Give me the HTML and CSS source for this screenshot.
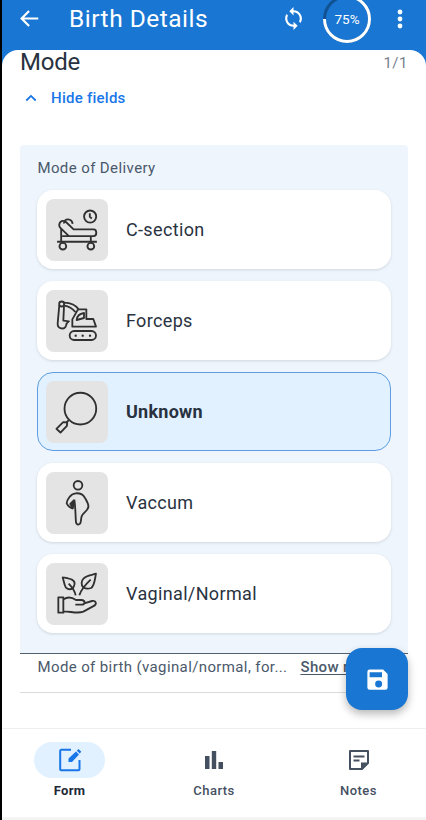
FILE: index.html
```html
<!DOCTYPE html>
<html lang="en">
<head>
<meta charset="utf-8">
<title>Birth Details</title>
<link rel="stylesheet" href="styles.css">
</head>
<body>
<div class="app">
  <header class="bar">
    <svg class="back" viewBox="0 0 24 24"><path d="M22 12H3.500M11.500 3.500 3 12l8.500 8.500"/></svg>
    <h1>Birth Details</h1>
    <svg class="sync" viewBox="0 0 24 24"><path d="M12 4V1L8 5l4 4V6a6 6 0 0 1 6 6c0 1-.25 1.970-.7 2.800l1.460 1.460A8 8 0 0 0 12 4zm0 14a6 6 0 0 1-6-6c0-1 .25-1.970.7-2.800L5.240 7.740A8 8 0 0 0 12 20v3l4-4-4-4z"/></svg>
    <div class="progress">
      <svg viewBox="0 0 50 50"><circle class="track" cx="25" cy="25" r="22.500"/><path class="arc" d="M25 2.500A22.500 22.500 0 1 1 2.500 25"/></svg>
      <span>75%</span>
    </div>
    <svg class="dots" viewBox="0 0 6 20"><circle cx="3" cy="3" r="2.400"/><circle cx="3" cy="10" r="2.400"/><circle cx="3" cy="17" r="2.400"/></svg>
  </header>
  <main class="sheet">
    <div class="section-title"><h2>Mode</h2><span>1/1</span></div>
    <div class="toggle"><svg viewBox="0 0 12 8"><path d="M1.300 6.500 6 1.900l4.700 4.600"/></svg><span>Hide fields</span></div>
    <section class="panel">
      <div class="label">Mode of Delivery</div>
      <div class="option">
        <div class="thumb"><svg viewBox="50 147 184 184"><circle cx="181" cy="199" r="18"/><path d="M180 189v11l6 5M103 220c0-17 24-17 26 1M95 235c-7-6-7-14-2-20 5-5 12-4 17 1l22 21h59c11 0 11 20 0 20h-73zM95 235v36M118 257l-20 0M83 274h118M183 257v16"/><circle cx="100" cy="287" r="10"/><circle cx="183" cy="287" r="10"/></svg></div>
        <span>C-section</span>
      </div>
      <div class="option">
        <div class="thumb"><svg viewBox="0 0 186 186"><circle cx="47" cy="42" r="7.500"/><path d="M54 38c21 0 37 9 46 22M55 47c14 2 25 9 33 19M40 45l-5 55c-1 18 21 20 25 7 1-6 4-10 9-13l-17-2 2-43M79 110V88l17-30h25v29h21l8 23zM92 90c1-12 9-19 22-21v15z"/><rect x="71" y="123" width="79" height="27" rx="13.500"/><path class="pins" d="M89 137h.1M110 137h.1M132 137h.1"/></svg></div>
        <span>Forceps</span>
      </div>
      <div class="option selected">
        <div class="thumb"><svg viewBox="50 48 184 184"><circle cx="152" cy="130" r="47"/><path d="M118 164l-8 7M101 170l-20 20 12 11 19-20 1-10z"/></svg></div>
        <span>Unknown</span>
      </div>
      <div class="option">
        <div class="thumb"><svg viewBox="0 0 186 186"><circle cx="96" cy="40" r="13"/><path d="M82 110c-8-2-16-8-20-16 1-11 11-28 27-30 14-1 23 4 28 14 5 9 12 19 10 28-3 12-16 16-20 27-3 10-1 17-5 22-5 5-11 2-12-4-2-20-1-44-5-68M82 110l-9-14 12-12"/><path class="fill" d="M84 82v28l-9-13z"/></svg></div>
        <span>Vaccum</span>
      </div>
      <div class="option">
        <div class="thumb"><svg viewBox="0 0 186 186"><path d="M89 97c-3-13-9-23-21-35M81 76c-11 6-23 2-25-11l-6-22c20 4 40 6 35 23zM100 97c5-16 17-31 34-47M112 74c-7-8-7-20 1-28 8-8 21-9 37-14-4 18-4 37-15 43-7 3-16 2-23-1zM37 103h15v46H37zM53 109c11-8 24-7 37 2h16c13 1 13 14 1 14H88M112 122l26-8c12-2 15 8 7 14l-33 18c-18 7-38-1-59-1"/></svg></div>
        <span>Vaginal/Normal</span>
      </div>
    </section>
    <div class="hint"><span>Mode of birth (vaginal/normal, for...</span><a>Show more</a></div>
  </main>
  <button class="fab" aria-label="Save"><svg viewBox="0 0 24 24"><path d="M17 3H5a2 2 0 0 0-2 2v14a2 2 0 0 0 2 2h14a2 2 0 0 0 2-2V7zM13 19a3.100 3.100 0 1 1 0-6.200A3.100 3.100 0 0 1 13 19zm3-9H5V5.500h11z"/></svg></button>
  <nav class="tabs">
    <div class="tab active"><div class="pill"><svg class="edit" viewBox="0 0 24 24"><path class="frame" d="M13 1.800H3.200a1 1 0 0 0-1 1v18.400a1 1 0 0 0 1 1H20.500a1 1 0 0 0 1-1V12"/><path class="pencil" d="M10.500 14v-3.500l7.500-7 3 3L14 14zM18.800 2.700 20.500 1l2.800 2.800-1.600 1.700z"/></svg></div><span>Form</span></div>
    <div class="tab"><div class="pill"><svg class="solid" viewBox="0 0 24 24"><path d="M3 8h4.500v13H3zM9.800 3h4.400v18H9.800zM16.500 14H21v7h-4.500z"/></svg></div><span>Charts</span></div>
    <div class="tab"><div class="pill"><svg class="note" viewBox="0 0 24 24"><path d="M3 3h18v12l-6 6H3zM6.500 8.500h11M6.500 12.500h6"/><path class="fold" d="M14 21v-6.500h7z"/></svg></div><span>Notes</span></div>
  </nav>
</div>
</body>
</html>
```
FILE: styles.css
```css
* { box-sizing: border-box; }
body { margin: 0; background: #000; font-family: Roboto, sans-serif; color: #29323f; }
svg { display: block; flex: none; }
h1, h2 { margin: 0; font-weight: 400; }
.app { position: relative; display: flex; flex-direction: column; width: 424px; height: 820px; margin-left: 2px; overflow: hidden; background: #1976d2; }

.bar { display: flex; align-items: center; flex: none; height: 50px; padding: 0 23px 13px 17px; color: #fff; }
.back { width: 21px; height: 21px; fill: none; stroke: #fff; stroke-width: 2.500; }
.bar h1 { flex: 1; margin-left: 29px; font-size: 24.500px; line-height: 30px; letter-spacing: .5px; }
.sync { width: 25px; height: 25px; fill: #fff; }
.progress { display: grid; place-items: center; width: 50px; height: 50px; margin-left: 16px; }
.progress > * { grid-area: 1 / 1; }
.progress svg { width: 50px; height: 50px; fill: none; stroke-width: 3; }
.track { stroke: #115293; }
.arc { stroke: #fff; }
.progress span { font-size: 13.500px; }
.dots { width: 6px; height: 20px; margin-left: 25px; fill: #fff; }

.sheet { flex: 1; padding: 0 18px; border-radius: 16px 16px 0 0; background: #fff; }
.section-title { display: flex; justify-content: space-between; height: 31px; }
.section-title h2 { font-size: 24px; line-height: 25px; letter-spacing: -.2px; }
.section-title span { font-size: 15px; line-height: 26px; letter-spacing: .5px; color: #77818d; }
.toggle { display: flex; align-items: center; gap: 14px; height: 34px; padding-left: 5px; font-size: 15px; font-weight: 500; letter-spacing: .25px; color: #1976e8; }
.toggle svg { width: 12px; height: 8px; fill: none; stroke: currentColor; stroke-width: 1.800; }

.panel { display: flex; flex-direction: column; gap: 12px; height: 509px; margin-top: 30px; padding: 14px 17px 0 17.400px; border-bottom: 1px solid #53606e; border-radius: 4px 4px 0 0; background: #eef5fd; }
.label { height: 19px; font-size: 15px; line-height: 18px; letter-spacing: .4px; color: #4b596a; }
.option { display: flex; align-items: center; flex: none; gap: 18px; height: 79px; padding-left: 8.600px; border-radius: 16px; background: #fff; box-shadow: 0 1px 3px #00000020; font-size: 18px; letter-spacing: .35px; }
.option.selected { padding-left: 7.600px; border: 1px solid #5c9de0; background: #e1f1ff; box-shadow: none; font-weight: 700; letter-spacing: .25px; }
.thumb { width: 62px; height: 62px; border-radius: 8px; background: #e4e4e4; }
.thumb svg { width: 62px; height: 62px; fill: none; stroke: #303030; stroke-width: 5.500; stroke-linejoin: round; }
.thumb .pins { stroke-width: 7; stroke-linecap: round; }
.thumb .fill { fill: #303030; stroke: none; }

.hint { display: flex; gap: 13px; height: 39px; padding: 4px 0 0 17.500px; border-bottom: 1px solid #d9dbdd; font-size: 15px; line-height: 19px; letter-spacing: .38px; white-space: nowrap; overflow: hidden; color: #4b596a; }
.hint a { font-weight: 500; text-decoration: underline; text-underline-offset: 2px; }

.fab { position: absolute; left: 344.400px; top: 648px; display: grid; place-items: center; width: 62px; height: 62px; padding: 0; border: 0; border-radius: 16px; background: #1976d2; box-shadow: 0 4px 9px #00000048; }
.fab svg { width: 27px; height: 27px; fill: #fff; }

.tabs { display: flex; justify-content: space-between; flex: none; height: 92px; padding: 13px 32px 0; border-top: 1px solid #eee; border-bottom: 3px solid #f4f4f4; background: #fff; color: #44505f; }
.tab { display: flex; flex-direction: column; align-items: center; gap: 4px; width: 71px; font-size: 13px; font-weight: 500; line-height: 17px; letter-spacing: .45px; }
.pill { display: grid; place-items: center; flex: none; width: 71px; height: 36px; border-radius: 18px; }
.pill svg { width: 24px; height: 24px; }
.active { font-weight: 700; letter-spacing: .3px; color: #202936; }
.active .pill { background: #e1f1ff; }
.frame { fill: none; stroke: #1976e8; stroke-width: 2; }
.pencil { fill: #1976e8; }
.solid, .fold { fill: #44505f; }
.note { fill: none; stroke: #44505f; stroke-width: 2; stroke-linejoin: round; }
.fold { stroke: none; }
```
